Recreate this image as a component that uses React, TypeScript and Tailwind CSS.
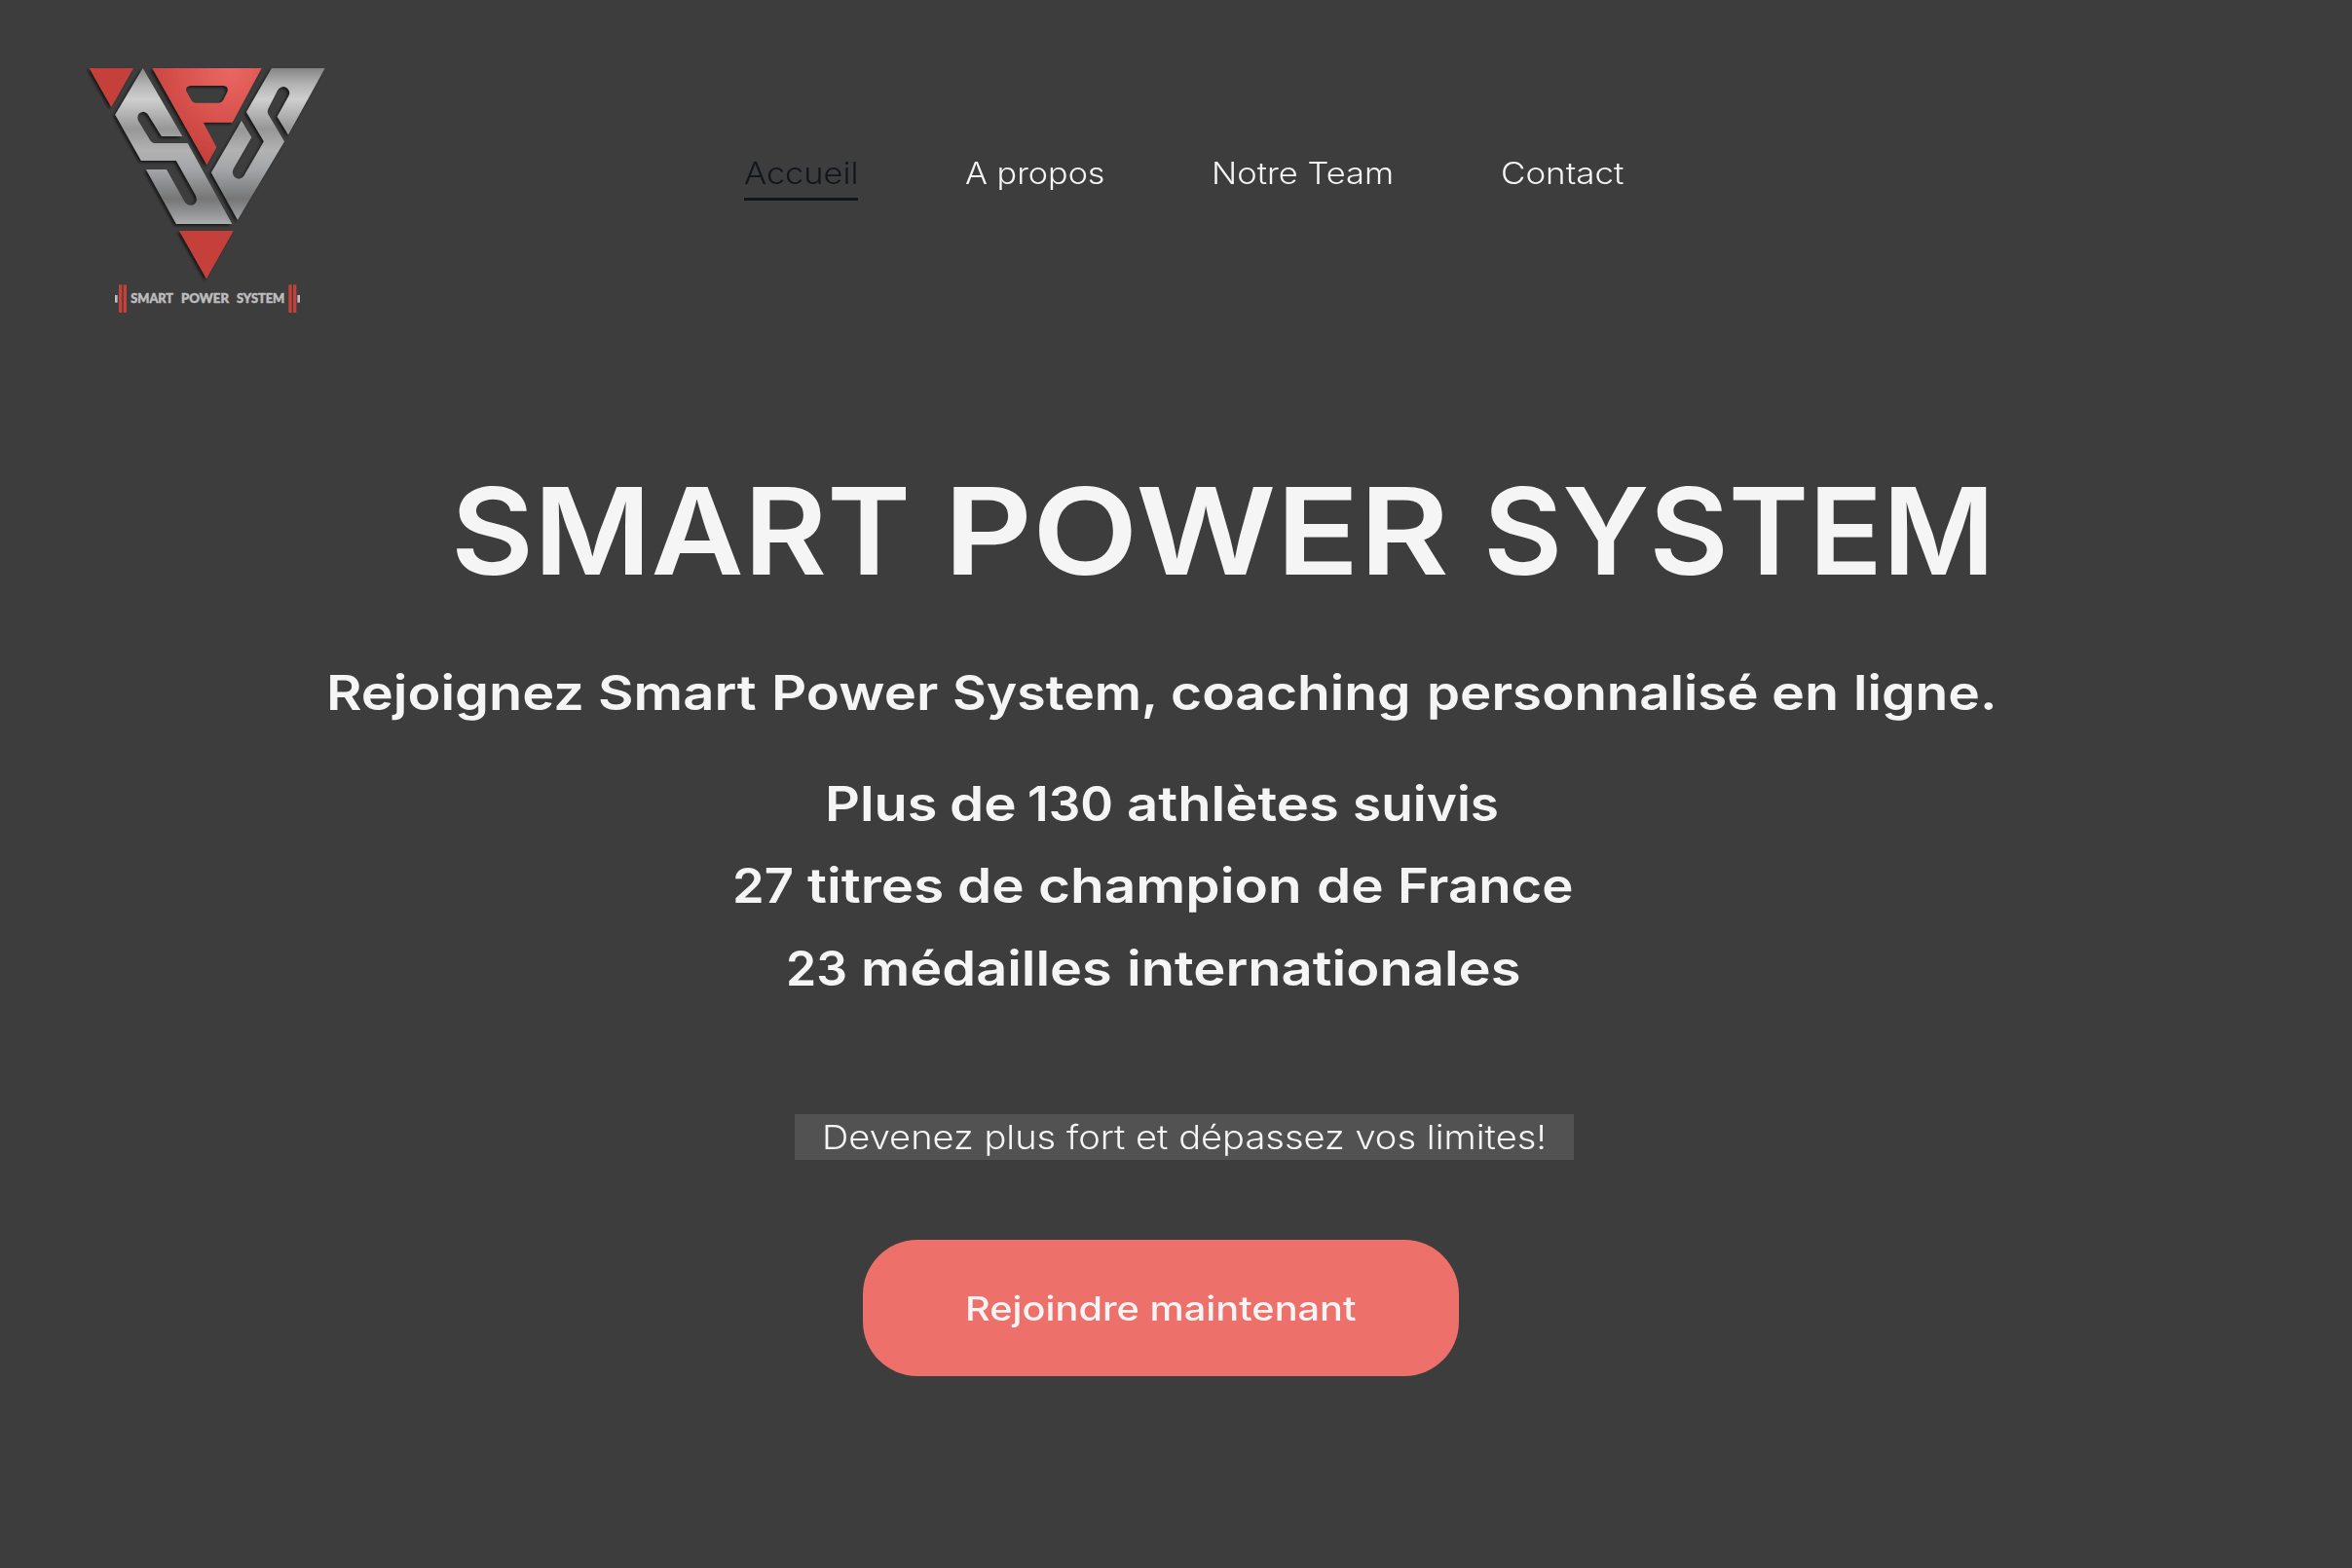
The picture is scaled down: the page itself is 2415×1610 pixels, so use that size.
import { useLayoutEffect, useRef, useState } from "react";
import clsx from "clsx";

/** Single line of text stretched horizontally to fill its container. */
function FitText({ children, className }: { children: string; className?: string }) {
  const box = useRef<HTMLSpanElement>(null);
  const text = useRef<HTMLSpanElement>(null);
  const [scale, setScale] = useState(1);

  useLayoutEffect(() => {
    if (box.current && text.current) {
      setScale(box.current.clientWidth / text.current.offsetWidth);
    }
  }, [children]);

  return (
    <span ref={box} className={clsx("block shrink-0 whitespace-nowrap", className)}>
      <span ref={text} className="inline-block origin-left" style={{ transform: `scaleX(${scale})` }}>
        {children}
      </span>
    </span>
  );
}

type Word = { text: string; box: string };

/** A row of words, each fitted to its own width. */
function Words({ words }: { words: Word[] }) {
  return (
    <span className="flex">
      {words.map((word, i) => (
        <FitText key={i} className={word.box}>
          {word.text}
        </FitText>
      ))}
    </span>
  );
}

function Logo() {
  return (
    <svg viewBox="0 0 810 840" className="mt-[55px] ml-[80px] h-[280px] w-[270px] shrink-0">
      <defs>
        <linearGradient id="metal" gradientUnits="userSpaceOnUse" x1="0" y1="45" x2="0" y2="525">
          <stop offset="0" stopColor="#858587" />
          <stop offset="0.1" stopColor="#b2b2b2" />
          <stop offset="0.2" stopColor="#cecece" />
          <stop offset="0.39" stopColor="#979797" />
          <stop offset="0.53" stopColor="#b2b2b3" />
          <stop offset="0.65" stopColor="#a3a5a9" />
          <stop offset="0.84" stopColor="#767676" />
          <stop offset="1" stopColor="#a9abae" />
        </linearGradient>
        <radialGradient id="coral" gradientUnits="userSpaceOnUse" cx="470" cy="50" r="290">
          <stop offset="0" stopColor="#ea6762" />
          <stop offset="0.5" stopColor="#d9534f" />
          <stop offset="1" stopColor="#c6403c" />
        </radialGradient>
        <filter id="shade" x="-10%" y="-10%" width="120%" height="120%">
          <feDropShadow dx="-6" dy="5" stdDeviation="4" floodColor="#000" floodOpacity="0.65" />
        </filter>
      </defs>
      <g filter="url(#shade)">
        <path fill="#c5403b" d="M35 45H171L103 165Z" />
        <path
          fill="url(#metal)"
          d="M200 45L322 255H258L217 189C205 169 176 182 186 207L222 266Q228 276 240 276H338L475 525H303L210 357H273L328 455C342 479 376 465 363 437L303 330H195L115 188Z"
        />
        <path
          fill="url(#coral)"
          fillRule="evenodd"
          d="M229 45H566L476 212H386L427 289L397 343ZM346 99Q332 100 333 114L349 143Q354 152 363 152H434Q443 152 448 143L461 117Q465 101 450 99Z"
        />
        <path
          fill="url(#metal)"
          d="M597 45H761L648 250L614 194L650 130C660 106 628 90 615 113L586 170Q582 180 587 188L636 271L492 512L411 367L504 207L535 258L480 353C466 378 498 399 512 376L573 271L519 180Z"
        />
        <path fill="#c5403b" d="M312 546H479L396 694Z" />
      </g>
      <g fill="#c5403b">
        <rect x="126" y="712" width="10" height="86" />
        <rect x="140" y="712" width="10" height="86" />
        <rect x="649" y="712" width="10" height="86" />
        <rect x="663" y="712" width="10" height="86" />
      </g>
      <g fill="#bdbdbd">
        <rect x="114" y="744" width="8" height="23" />
        <rect x="676" y="744" width="8" height="23" />
      </g>
      <g
        fill="#bdbdbd"
        stroke="#bdbdbd"
        strokeWidth="1.5"
        className="font-['Lato',sans-serif] text-[39px] font-black"
      >
        <text x="163" y="769" textLength="131" lengthAdjust="spacingAndGlyphs">
          SMART
        </text>
        <text x="318" y="769" textLength="147" lengthAdjust="spacingAndGlyphs">
          POWER
        </text>
        <text x="489" y="769" textLength="148" lengthAdjust="spacingAndGlyphs">
          SYSTEM
        </text>
      </g>
    </svg>
  );
}

const links = [
  { label: "Accueil", width: "w-[117px]", active: true },
  { label: "A propos", width: "w-[143px]" },
  { label: "Notre Team", width: "w-[187px]" },
  { label: "Contact", width: "w-[127px]" },
];

const title: Word[] = [
  { text: "SMART", box: "ml-[463px] w-[472px]" },
  { text: "POWER", box: "ml-[34px] w-[519px]" },
  { text: "SYSTEM", box: "ml-[35px] w-[525px]" },
];

const subtitle: Word[] = [
  { text: "Rejoignez", box: "ml-[335px] w-[265px]" },
  { text: "Smart", box: "ml-[14px] w-[163px]" },
  { text: "Power", box: "ml-[15px] w-[171px]" },
  { text: "System,", box: "ml-[15px] w-[211px]" },
  { text: "coaching", box: "ml-[13px] w-[246px]" },
  { text: "personnalisé", box: "ml-[17px] w-[341px]" },
  { text: "en", box: "ml-[13px] w-[69px]" },
  { text: "ligne.", box: "ml-[15px] w-[148px]" },
];

const stats: Word[][] = [
  [
    { text: "Plus", box: "ml-[847px] w-[115px]" },
    { text: "de", box: "ml-[13px] w-[69px]" },
    { text: "130", box: "ml-[11px] w-[88px]" },
    { text: "athlètes", box: "ml-[14px] w-[218px]" },
    { text: "suivis", box: "ml-[14px] w-[150px]" },
  ],
  [
    { text: "27", box: "ml-[752px] w-[63px]" },
    { text: "titres", box: "ml-[14px] w-[140px]" },
    { text: "de", box: "ml-[14px] w-[69px]" },
    { text: "champion", box: "ml-[14px] w-[271px]" },
    { text: "de", box: "ml-[15px] w-[69px]" },
    { text: "France", box: "ml-[14px] w-[181px]" },
  ],
  [
    { text: "23", box: "ml-[807px] w-[63px]" },
    { text: "médailles", box: "ml-[14px] w-[258px]" },
    { text: "internationales", box: "ml-[15px] w-[405px]" },
  ],
];

export default function App() {
  return (
    <div className="h-[1610px] w-[2415px] overflow-hidden bg-[#3d3d3d] font-['Inter',sans-serif] text-[#f5f5f5]">
      <header className="flex h-[470px] items-start">
        <Logo />
        <nav className="mt-[158px] ml-[414px] flex gap-[110px] text-[30.8px] leading-[40px] font-light">
          {links.map((link) => (
            <a
              key={link.label}
              href="#"
              className={clsx(
                "block pb-[5px]",
                link.width,
                link.active && "border-b-[3px] border-[#11151c] text-[#11151c]",
              )}
            >
              <FitText>{link.label}</FitText>
            </a>
          ))}
        </nav>
      </header>
      <main>
        <h1 className="text-[123.8px] leading-[150px] font-semibold">
          <Words words={title} />
        </h1>
        <h2 className="mt-[56px] text-[50px] leading-[70px] font-semibold">
          <Words words={subtitle} />
        </h2>
        <ul className="mt-[37px] text-[50px] leading-[84.3px] font-semibold">
          {stats.map((words, i) => (
            <li key={i}>
              <Words words={words} />
            </li>
          ))}
        </ul>
        <p className="mt-[108px] ml-[816px] w-[800px] bg-[#525252] px-[28px] text-[34.6px] leading-[47px] font-light">
          <FitText>Devenez plus fort et dépassez vos limites!</FitText>
        </p>
        <button className="mt-[82px] ml-[886px] block h-[140px] w-[612px] rounded-[56px] bg-[#ed706b] px-[105px] text-left text-[34.6px] leading-[140px] font-medium">
          <FitText>Rejoindre maintenant</FitText>
        </button>
      </main>
    </div>
  );
}
